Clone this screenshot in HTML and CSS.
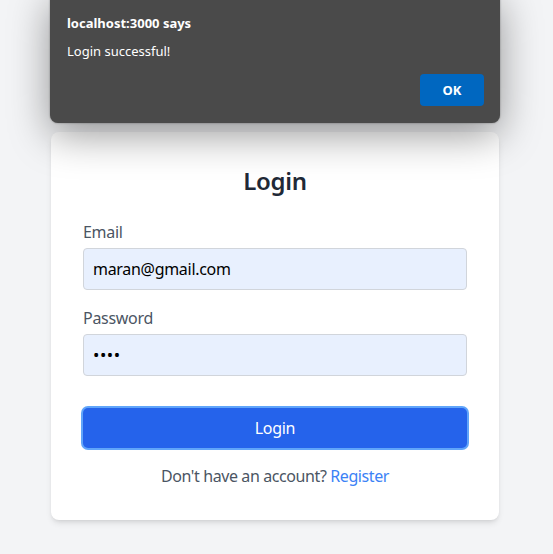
FILE: index.html
```html
<!DOCTYPE html>
<html lang="en">
<head>
<meta charset="utf-8">
<title>Login</title>
<link rel="stylesheet" href="styles.css">
</head>
<body>
<main class="page">
  <div class="card">
    <h2 class="title">Login</h2>
    <form class="form">
      <div class="field">
        <label class="label">Email</label>
        <div class="input">maran@gmail.com</div>
      </div>
      <div class="field">
        <label class="label">Password</label>
        <div class="input dots">••••</div>
      </div>
      <button type="button" class="btn">Login</button>
    </form>
    <p class="foot">Don't have an account? <a class="link">Register</a></p>
  </div>
</main>
<div class="dialog">
  <div class="dlg-title">localhost:3000 says</div>
  <div class="dlg-msg">Login successful!</div>
  <div class="dlg-actions"><button type="button" class="dlg-ok">OK</button></div>
</div>
</body>
</html>
```
FILE: styles.css
```css
* { box-sizing: border-box; }
html, body { margin: 0; padding: 0; }
body {
  background: #f3f4f6;
  font-family: "Noto Sans", "Open Sans", sans-serif;
  height: 554px;
  overflow: hidden;
  position: relative;
}
.page {
  display: flex;
  justify-content: center;
  padding-top: 132px;
}
.card {
  width: 448px;
  margin-left: -3px;
  background: #fff;
  border-radius: 8px;
  box-shadow: 0 4px 6px -1px rgba(0,0,0,.1), 0 2px 4px -2px rgba(0,0,0,.1);
  padding: 32px;
}
.title {
  margin: 0 0 24px;
  padding-top: 2px;
  text-align: center;
  font-size: 24px;
  line-height: 30px;
  font-weight: 600;
  letter-spacing: -0.3px;
  color: #1f2937;
}
.form { display: flex; flex-direction: column; }
.field { display: flex; flex-direction: column; margin-bottom: 16px; }
.field + .field { margin-bottom: 32px; }
.label {
  font-size: 16px;
  line-height: 24px;
  color: #4b5563;
  margin-bottom: 4px;
  letter-spacing: -0.3px;
}
.input {
  height: 42px;
  border: 1px solid #d1d5db;
  border-radius: 4px;
  background: #e8f0fe;
  padding: 0 9px;
  font-size: 16px;
  line-height: 40px;
  color: #000;
  letter-spacing: -0.3px;
}
.dots { font-size: 17px; letter-spacing: 0.5px; padding-left: 9px; }
.btn {
  height: 40px;
  border: none;
  border-radius: 5px;
  background: #2563eb;
  color: #fff;
  font-family: inherit;
  font-size: 16px;
  letter-spacing: -0.3px;
  box-shadow: 0 0 0 2px #60a5fa;
}
.foot {
  margin: 16px 0 0;
  text-align: center;
  font-size: 16px;
  line-height: 24px;
  color: #4b5563;
  letter-spacing: -0.4px;
}
.link { color: #3b82f6; }
.dialog {
  position: absolute;
  left: 50px;
  top: -10px;
  width: 450px;
  height: 133px;
  background: #4a4a4a;
  border-radius: 8px;
  box-shadow: 0 12px 40px rgba(0,0,0,.4), 0 0 2px rgba(0,0,0,.4);
  padding: 24px 16px 0 17px;
  color: #fff;
  font-size: 13px;
}
.dlg-title { font-weight: 700; line-height: 18px; }
.dlg-msg { margin-top: 10px; line-height: 18px; }
.dlg-actions { display: flex; justify-content: flex-end; margin-top: 14px; }
.dlg-ok {
  width: 64px;
  height: 32px;
  border: none;
  border-radius: 4px;
  background: #0067c0;
  color: #fff;
  font-family: inherit;
  font-weight: 700;
  font-size: 13px;
}
```
